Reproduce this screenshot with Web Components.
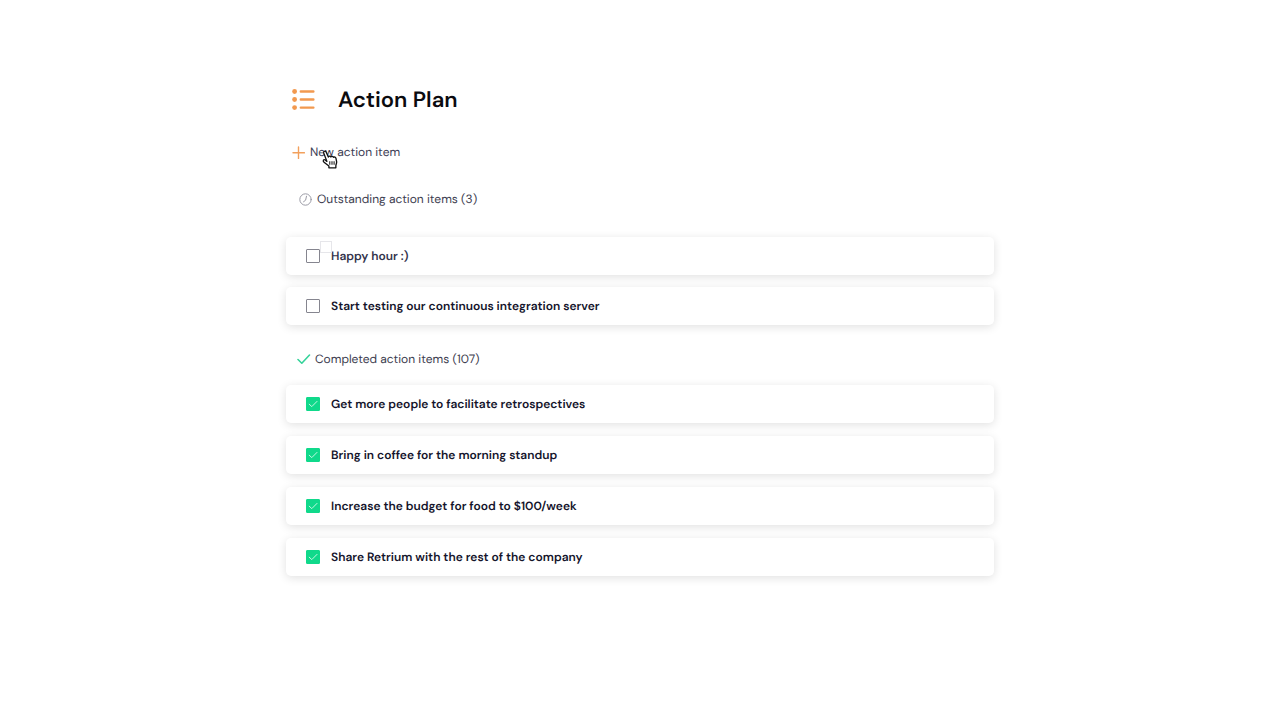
<!DOCTYPE html>
<html lang="en">
<head>
<meta charset="utf-8">
<meta name="viewport" content="width=device-width, initial-scale=1">
<title>Action Plan</title>
<style>
    body {
        margin: 0;
        background: #fff;
        color: #14142b;
        font-family: "DM Sans", Inter, "Liberation Sans", sans-serif;
        font-size: 12px;
        line-height: 16px;
        text-rendering: geometricPrecision;
    }
</style>
</head>
<body>
<action-plan heading="Action Plan">
    <new-action-button slot="toolbar">New action item</new-action-button>
    <action-section kind="outstanding">
        <span slot="title">Outstanding action items (3)</span>
        <action-item moving>Happy hour :)</action-item>
        <action-item>Start testing our continuous integration server</action-item>
    </action-section>
    <action-section kind="completed">
        <span slot="title">Completed action items (107)</span>
        <action-item checked>Get more people to facilitate retrospectives</action-item>
        <action-item checked>Bring in coffee for the morning standup</action-item>
        <action-item checked>Increase the budget for food to $100/week</action-item>
        <action-item checked>Share Retrium with the rest of the company</action-item>
    </action-section>
</action-plan>

<script>
class ActionPlan extends HTMLElement {
    constructor() {
        super();

        this.attachShadow({mode: "open"});
        this.shadowRoot.innerHTML = `
            <style>
                :host {
                    display: block;
                    box-sizing: border-box;
                    max-width: 724px;
                    margin: 0 auto;
                    padding: 84px 8px 40px;
                }

                header {
                    display: flex;
                    align-items: center;
                    gap: 22px;
                    padding-left: 6px;
                }

                h1 {
                    margin: 0;
                    color: #0b0b0f;
                    font-size: 22px;
                    font-weight: 600;
                    line-height: 32px;
                }
            </style>
            <header>
                <svg width="24" height="24" viewBox="0 0 24 24" aria-hidden="true">
                    <g fill="#f2994f">
                        <circle cx="2.6" cy="3.5" r="2.4"/>
                        <circle cx="2.6" cy="11.5" r="2.4"/>
                        <circle cx="2.6" cy="19.6" r="2.4"/>
                    </g>
                    <path d="M8.8 3.5H21.4M8.8 11.5H21.4M8.8 19.6H21.4" stroke="#f2994f" stroke-width="2.4" stroke-linecap="round"/>
                </svg>
                <h1></h1>
            </header>
            <slot name="toolbar"></slot>
            <main><slot></slot></main>
        `;
    }

    connectedCallback() {
        this.shadowRoot.querySelector("h1").textContent = this.getAttribute("heading");
    }
}

class NewActionButton extends HTMLElement {
    constructor() {
        super();

        this.attachShadow({mode: "open"});
        this.shadowRoot.innerHTML = `
            <style>
                :host {
                    display: flex;
                    position: relative;
                    margin-top: 28px;
                    padding-left: 6px;
                }

                button {
                    display: flex;
                    align-items: center;
                    gap: 5px;
                    padding: 0;
                    border: 0;
                    background: none;
                    color: #3e3e55;
                    font: inherit;
                    text-rendering: inherit;
                    cursor: pointer;
                }

                .pointer {
                    position: absolute;
                    left: 34px;
                    top: 5px;
                    pointer-events: none;
                }
            </style>
            <button type="button">
                <svg width="13" height="13" viewBox="0 0 13 13" aria-hidden="true">
                    <path d="M6.5 1V12.5M1 6.7H12.4" fill="none" stroke="#f2a05c" stroke-width="1.4" stroke-linecap="round"/>
                </svg>
                <span><slot></slot></span>
            </button>
            <svg class="pointer" width="20" height="21" viewBox="0 0 18 19" aria-hidden="true">
                <path d="M6.2 11.2L3.3 3.6C2.8 2 4.9 1.3 5.5 2.8L7.5 7.3C8 6.2 9.4 6.2 9.8 7.2C10.5 6.3 11.8 6.5 12.1 7.5C13 6.9 14.2 7.4 14.4 8.5L15 11.4C15.2 12.8 14.5 13.6 14.3 15V17H8V15.4L3.6 12C2 10.5 3.4 9.1 4.7 10Z" fill="#fff" stroke="#111" stroke-width="1.2" stroke-linejoin="round"/>
                <path d="M8.8 11V14.3M10.8 11V14.3M12.7 11V14.3" fill="none" stroke="#222"/>
            </svg>
        `;
    }
}

class ActionSection extends HTMLElement {
    constructor() {
        super();

        this.attachShadow({mode: "open"});
        this.shadowRoot.innerHTML = `
            <style>
                :host {
                    display: block;
                    margin-top: 31px;
                }

                :host([kind="completed"]) {
                    margin-top: 26px;
                }

                h2 {
                    display: flex;
                    align-items: center;
                    gap: 5px;
                    margin: 0 0 30px;
                    padding-left: 13px;
                    color: #3e3e50;
                    font-size: 12px;
                    font-weight: 400;
                    line-height: 16px;
                }

                .items {
                    display: flex;
                    flex-direction: column;
                    gap: 12px;
                }

                :host([kind="completed"]) h2 {
                    gap: 4px;
                    margin-bottom: 18px;
                    padding-left: 11px;
                }

                :host([kind="completed"]) .items {
                    gap: 13px;
                }

                .check,
                :host([kind="completed"]) .clock {
                    display: none;
                }

                :host([kind="completed"]) .check {
                    display: block;
                }
            </style>
            <section>
                <h2>
                    <svg class="clock" width="13" height="13" viewBox="0 0 13 13" fill="none" stroke="#9a9aa5" stroke-linecap="round" aria-hidden="true">
                        <circle cx="6.5" cy="6.5" r="5.7"/>
                        <path d="M7.5 3.2L6.6 7.2L4.5 8.8"/>
                    </svg>
                    <svg class="check" width="14" height="12" viewBox="0 0 14 12" fill="none" aria-hidden="true">
                        <path d="M1 6.5L4.8 10.2L12.5 2" stroke="#35d39a" stroke-width="1.6" stroke-linecap="round" stroke-linejoin="round"/>
                    </svg>
                    <slot name="title"></slot>
                </h2>
                <div class="items"><slot></slot></div>
            </section>
        `;
    }
}

class ActionItem extends HTMLElement {
    constructor() {
        super();

        this.attachShadow({mode: "open"});
        this.shadowRoot.innerHTML = `
            <style>
                :host {
                    display: block;
                    position: relative;
                    border-radius: 5px;
                    background: #fff;
                    box-shadow: 0 2px 10px rgba(0, 0, 0, 0.12);
                }

                :host([moving]) {
                    color: #34344c;
                }

                label {
                    display: flex;
                    align-items: center;
                    gap: 11px;
                    padding: 11px 20px;
                    font-weight: 600;
                    cursor: pointer;
                }

                .box {
                    display: grid;
                }

                input,
                .box svg {
                    grid-area: 1 / 1;
                }

                input {
                    appearance: none;
                    box-sizing: border-box;
                    width: 14px;
                    height: 14px;
                    margin: 0;
                    border: 1px solid #85858f;
                    border-radius: 1px;
                    background: #fff;
                }

                input:checked {
                    border-color: #10d98b;
                    background: #10d98b;
                }

                .box svg {
                    visibility: hidden;
                    pointer-events: none;
                }

                input:checked + svg {
                    visibility: visible;
                }

                .trail {
                    display: none;
                    position: absolute;
                    left: 34px;
                    top: 4px;
                    box-sizing: border-box;
                    width: 12px;
                    height: 12px;
                    border: 1px solid #e6e6ea;
                }

                :host([moving]) .trail {
                    display: block;
                }
            </style>
            <label>
                <span class="box">
                    <input type="checkbox">
                    <svg width="14" height="14" viewBox="0 0 14 14" fill="none" aria-hidden="true">
                        <path d="M3.2 7.2L5.8 9.6L11 4.4" stroke="#c4f8e2" stroke-linecap="round" stroke-linejoin="round"/>
                    </svg>
                </span>
                <span><slot></slot></span>
            </label>
            <span class="trail"></span>
        `;
    }

    connectedCallback() {
        this.shadowRoot.querySelector("input").checked = this.hasAttribute("checked");
    }
}

window.customElements.define("action-plan", ActionPlan);
window.customElements.define("new-action-button", NewActionButton);
window.customElements.define("action-section", ActionSection);
window.customElements.define("action-item", ActionItem);
</script>
</body>
</html>
